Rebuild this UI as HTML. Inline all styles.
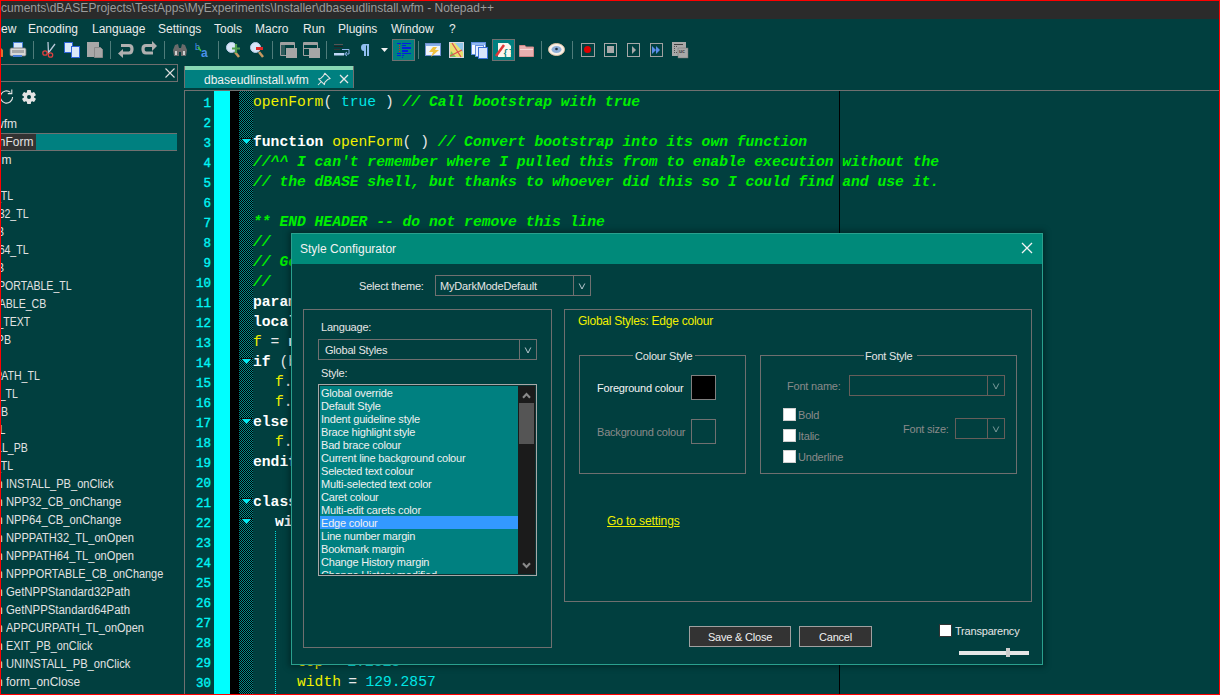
<!DOCTYPE html>
<html><head><meta charset="utf-8">
<style>
*{box-sizing:border-box;margin:0;padding:0}
html,body{width:1220px;height:695px;overflow:hidden}
body{background:#013f3f;position:relative;font-family:"Liberation Sans",sans-serif;font-size:12px;color:#e6e6e6}
.a{position:absolute;white-space:pre}
.t{position:absolute;white-space:pre;line-height:14px}
#title{left:0;top:0;width:1220px;height:19px;background:#2b2b2b}
#menu .t{top:22px;color:#ececec}
.sep{position:absolute;top:41px;width:1px;height:18px;background:#5c7070}
#lp{position:absolute;left:0;top:0;width:181px;height:695px;overflow:hidden}
#lp .t{color:#e2e2e2;left:0}
.code{position:absolute;left:253px;height:20px;line-height:20px;font-family:"Liberation Mono",monospace;font-size:14.67px;white-space:pre;color:#e0e0e0}
.ln{position:absolute;left:185px;width:26px;text-align:right;height:20px;line-height:20px;font-family:"Liberation Mono",monospace;font-size:12.5px;color:#00f4f4;-webkit-text-stroke:0.35px #00f4f4}
.cm{color:#00f000;font-weight:bold;font-style:italic}
.kw{color:#ffffff;font-weight:bold}
.fn{color:#f0f000}
.nu{color:#00e6e6}
.op{color:#e8e8e8}
.gb{position:absolute;border:1px solid #6f6f6f}
.dis{color:#8a8a8a}
.s{font-size:11px;letter-spacing:-0.2px}
.cb{position:absolute;width:13px;height:13px;background:#fff;border:1px solid #555}
</style></head><body>

<!-- title bar -->
<div id="title" class="a"></div>
<div class="t" style="left:1px;top:1px;color:#9c9c9c">cuments\dBASEProjects\TestApps\MyExperiments\Installer\dbaseudlinstall.wfm - Notepad++</div>

<!-- menu -->
<div id="menu">
<div class="t" style="left:1px">ew</div>
<div class="t" style="left:28px">Encoding</div>
<div class="t" style="left:92px">Language</div>
<div class="t" style="left:158px">Settings</div>
<div class="t" style="left:214px">Tools</div>
<div class="t" style="left:255px">Macro</div>
<div class="t" style="left:303px">Run</div>
<div class="t" style="left:338px">Plugins</div>
<div class="t" style="left:391px">Window</div>
<div class="t" style="left:449px">?</div>
</div>

<!-- toolbar -->
<div id="tb"><svg class="a" style="left:0;top:38px" width="700" height="24" viewBox="0 38 700 24" shape-rendering="crispEdges">
<g fill="#4f7c7a"><rect x="33" y="41" width="1" height="18"/><rect x="110" y="41" width="1" height="18"/><rect x="164" y="41" width="1" height="18"/><rect x="218" y="41" width="1" height="18"/><rect x="272" y="41" width="1" height="18"/><rect x="326" y="41" width="1" height="18"/><rect x="418" y="41" width="1" height="18"/><rect x="541" y="41" width="1" height="18"/><rect x="572" y="41" width="1" height="18"/></g>
<g shape-rendering="auto">
<!-- partial save-all icon -->
<path d="M1 48 L3 50 L3 57 L1 57 Z" fill="#e07030"/>
<!-- printer -->
<rect x="13.5" y="42.5" width="9" height="8" fill="#d8e8fa" stroke="#4a80d8"/>
<rect x="10" y="48" width="16" height="8" rx="1.5" fill="#d8d8d8" stroke="#707070" stroke-width="0.8"/>
<rect x="12" y="50" width="12" height="3" fill="#a8a8a8"/>
<rect x="13" y="55" width="9" height="2" fill="#4a80d8"/>
<!-- scissors -->
<path d="M48.5 54 L48 42 M49 52 L55 44" stroke="#b8c8d8" stroke-width="1.3" fill="none"/>
<circle cx="45" cy="53" r="2.2" stroke="#e04040" stroke-width="1.3" fill="none"/>
<circle cx="50.5" cy="55" r="2.2" stroke="#e04040" stroke-width="1.3" fill="none"/>
<!-- copy -->
<rect x="64.5" y="42.5" width="8" height="10" fill="#dbe8f8" stroke="#2f64d8"/>
<rect x="71.5" y="46.5" width="8" height="11" fill="#dbe8f8" stroke="#2f64d8"/>
<!-- paste -->
<rect x="87" y="42" width="12" height="15" fill="#a8a8a8"/>
<path d="M94.5 47.5 H100.5 L102.5 49.5 V57.5 H94.5 Z" fill="#a8a8a8" stroke="#8a8a8a"/>
<!-- undo -->
<path d="M121 45.5 H129 Q132 45.5 132 49 Q132 53 129 53 H122" stroke="#b0b0b0" stroke-width="3.2" fill="none"/>
<path d="M123 49 L118 53.5 L123 58 Z" fill="#b0b0b0"/>
<!-- redo -->
<path d="M154 45.5 H146 Q143 45.5 143 49 Q143 53 146 53 H153" stroke="#b0b0b0" stroke-width="3.2" fill="none" transform="translate(0,0)"/>
<path d="M152 41 L157 46 L152 51 Z" fill="#b0b0b0"/>
<!-- binoculars -->
<path d="M175 45 L178 44 L179 48 L181 48 L182 44 L185 45 L187 50 L186 56 L181 56 L181 52 L179 52 L179 56 L174 56 L173 50 Z" fill="#6a6a6a"/>
<rect x="175" y="51" width="2" height="4" fill="#d0d0d0"/><rect x="183" y="51" width="2" height="4" fill="#d0d0d0"/>
<!-- replace -->
<text x="195" y="50" font-family="Liberation Sans" font-size="9" fill="#4a90e8">b</text>
<text x="201" y="57" font-family="Liberation Sans" font-size="12" font-weight="bold" fill="#4a90e8">a</text>
<path d="M198 47 L201 51" stroke="#40c040" stroke-width="1.5"/>
<!-- zoom in -->
<circle cx="231.5" cy="47.5" r="5" fill="#d8e6f8" stroke="#b8cce8"/>
<path d="M235 52 L239 57" stroke="#c89860" stroke-width="2.5"/>
<path d="M236 44 V53 M232 48.5 H240" stroke="#50a050" stroke-width="2.2"/>
<!-- zoom out -->
<circle cx="255.5" cy="47.5" r="5" fill="#d8e6f8" stroke="#b8cce8"/>
<path d="M259 52 L263 57" stroke="#c89860" stroke-width="2.5"/>
<rect x="256" y="47" width="7" height="3" fill="#e02828"/>
<!-- sync v -->
<path d="M280.5 42.5 H294.5 V57.5 M280.5 42.5 V55.5 H286" stroke="#a0a0a0" fill="none"/>
<rect x="281" y="43" width="14" height="2" fill="#a0a0a0"/>
<rect x="286" y="48" width="11" height="10" fill="#a6a6a6"/>
<rect x="281" y="45" width="4" height="10" fill="#a0a0a0" opacity="0.3"/>
<!-- sync h -->
<path d="M303.5 42.5 H317.5 V50 M303.5 42.5 V55.5 H309" stroke="#a0a0a0" fill="none"/>
<rect x="304" y="43" width="14" height="2" fill="#a0a0a0"/>
<rect x="304" y="48" width="6" height="1" fill="#a0a0a0"/>
<rect x="309" y="48" width="11" height="10" fill="#a6a6a6"/>
<!-- word wrap -->
<rect x="334" y="44" width="9" height="1" fill="#555"/><rect x="334" y="46" width="9" height="1" fill="#222"/><rect x="334" y="49" width="6" height="1" fill="#333"/>
<rect x="334" y="53" width="10" height="2.5" fill="#c0d8f8"/>
<path d="M342 49.5 H349 V54 H345" stroke="#8ab0e8" stroke-width="1" fill="none"/>
<path d="M347 52 L344.5 54 L347 56" stroke="#8ab0e8" stroke-width="1" fill="none"/>
<!-- pilcrow -->
<path d="M362 44 H369 V56 H367 V45.5 H366 V56 H364 V51 Q361 51 361 47.5 Q361 44 364 44 Z" fill="#90bef0"/>
<!-- dropdown -->
<path d="M381 48 H388 L384.5 52 Z" fill="#f0f0f0"/>
<!-- indent guide pressed -->
<rect x="392.5" y="39.5" width="22" height="21" fill="#008080" stroke="#707070"/>
<g fill="#0020e0"><rect x="397" y="43" width="4" height="1"/><rect x="402" y="43" width="9" height="1"/><rect x="402" y="45" width="4" height="1"/><rect x="402" y="47" width="9" height="2"/><rect x="402" y="50" width="6" height="2"/><rect x="397" y="53" width="4" height="1"/><rect x="402" y="53" width="9" height="1"/><rect x="397" y="55" width="4" height="1"/><rect x="402" y="55" width="2" height="1"/><rect x="402" y="57" width="1" height="1"/></g>
<g fill="#e02020"><rect x="399" y="45" width="1" height="1"/><rect x="399" y="47" width="1" height="1"/><rect x="399" y="49" width="1" height="1"/><rect x="399" y="51" width="1" height="1"/></g>
<!-- lightning window -->
<rect x="425.5" y="43.5" width="15" height="12" fill="#f0f4fa" stroke="#7090d0"/>
<rect x="426" y="44" width="14" height="2" fill="#88aee8"/>
<path d="M433 47 L437 47 L435 50 L439 50 L431 57 L433 52 L429 52 Z" fill="#f0c040"/>
<!-- map -->
<rect x="449.5" y="42.5" width="14" height="15" fill="#e8e070" stroke="#d8d8e0"/>
<path d="M455 43 H463 V52 Z" fill="#90c8e8"/>
<path d="M451 51 L456 57 L450 57 Z" fill="#80c060"/>
<path d="M452 43 L461 57 M450 56 L462 50" stroke="#e05050" stroke-width="1.3"/>
<!-- multi doc -->
<rect x="471.5" y="42.5" width="14" height="12" fill="#f4f8ff" stroke="#6090e0"/>
<rect x="472" y="43" width="13" height="2" fill="#90b8f0"/>
<rect x="475.5" y="45.5" width="8" height="11" fill="#e8f0ff" stroke="#6090e0"/>
<rect x="478.5" y="47.5" width="9" height="11" fill="#d8e6fa" stroke="#3a70d8"/>
<!-- function list pressed -->
<rect x="492.5" y="39.5" width="22" height="21" fill="#008080" stroke="#707070"/>
<path d="M498 43 H508 L511 46 V57 H498 Z" fill="#faf6ee"/>
<path d="M496 56 L504 45" stroke="#e03838" stroke-width="2.5"/>
<text x="503" y="56" font-family="Liberation Mono" font-size="9" font-weight="bold" fill="#008080">{}</text>
<!-- folder -->
<path d="M519.5 45.5 H525 L526 47 H533.5 V56.5 H519.5 Z" fill="#e8b0b0" stroke="#d08888"/>
<rect x="520" y="49" width="13" height="1" fill="#f8d8d8"/>
<!-- eye -->
<ellipse cx="556.5" cy="49.5" rx="8" ry="6" fill="#f8f0e8" stroke="#e0c0a0"/>
<ellipse cx="556.5" cy="49.5" rx="5" ry="3.5" fill="#90b0d8"/>
<circle cx="556.5" cy="49" r="1.3" fill="#203040"/>
<!-- record -->
<rect x="581.5" y="43.5" width="13" height="13" fill="none" stroke="#a0a0a0"/>
<circle cx="587.5" cy="49.5" r="3.5" fill="#e00000"/>
<!-- stop -->
<rect x="604.5" y="43.5" width="12" height="13" fill="none" stroke="#a8a8a8"/>
<rect x="607" y="46" width="7" height="7" fill="#a8a8a8"/>
<!-- play -->
<rect x="627.5" y="43.5" width="12" height="13" fill="none" stroke="#a8a8a8"/>
<path d="M632 46 L636 50 L632 54 Z" fill="#a8a8a8"/>
<!-- play multi -->
<rect x="650.5" y="43.5" width="12" height="13" fill="none" stroke="#a0a0a0"/>
<path d="M652 46 L656 50 L652 54 Z M656 46 L660 50 L656 54 Z" fill="#5a8ce8"/>
<!-- save macro -->
<rect x="672" y="42" width="14" height="14" fill="#a8a8a8"/>
<rect x="674" y="44" width="9" height="1" fill="#404040"/>
<g fill="#505050"><rect x="674" y="46" width="1" height="1"/><rect x="676" y="46" width="1" height="1"/><rect x="674" y="48" width="1" height="1"/><rect x="674" y="50" width="1" height="1"/><rect x="674" y="52" width="1" height="1"/><rect x="676" y="52" width="1" height="1"/></g>
<rect x="678" y="48" width="10" height="10" fill="#a8a8a8" stroke="#707070" stroke-width="0.5"/>
<text x="679" y="53" font-family="Liberation Sans" font-size="5" font-weight="bold" fill="#404040">uc</text>
</g>
</svg>
</div>

<!-- left panel -->
<div id="lp">
<div class="a" style="left:-10px;top:64px;width:188px;height:18px;border:1px solid #6f6f6f"></div>
<svg class="a" style="left:164px;top:67px" width="12" height="12" viewBox="0 0 12 12"><path d="M1.5 1.5 L10.5 10.5 M10.5 1.5 L1.5 10.5" stroke="#e0e0e0" stroke-width="1.1"/></svg>
<svg class="a" style="left:0;top:86px" width="40" height="22" viewBox="0 86 40 22"><path d="M12.6 97 A6.1 6.1 0 1 1 10.4 92.3" stroke="#e4e4e4" stroke-width="1.1" fill="none"/><path d="M7.8 93.6 H11.8 V89.6" stroke="#e4e4e4" stroke-width="1.1" fill="none"/><g transform="translate(29,97)"><circle r="5.2" fill="#e4e4e4"/><rect x="-2" y="-7" width="4" height="4" rx="0.8" fill="#e4e4e4" transform="rotate(0)"/><rect x="-2" y="-7" width="4" height="4" rx="0.8" fill="#e4e4e4" transform="rotate(60)"/><rect x="-2" y="-7" width="4" height="4" rx="0.8" fill="#e4e4e4" transform="rotate(120)"/><rect x="-2" y="-7" width="4" height="4" rx="0.8" fill="#e4e4e4" transform="rotate(180)"/><rect x="-2" y="-7" width="4" height="4" rx="0.8" fill="#e4e4e4" transform="rotate(240)"/><rect x="-2" y="-7" width="4" height="4" rx="0.8" fill="#e4e4e4" transform="rotate(300)"/><circle r="2" fill="#013f3f"/></g></svg>
<div class="a" style="left:0;top:133px;width:177px;height:18px;background:#008080;border-top:1px solid #707070;border-bottom:1px solid #707070"></div>
<div class="a" style="left:0;top:134px;width:36px;height:16px;background:#333333"></div>
<div class="t" style="left:-5.0px;top:117px;transform:scaleX(1.0);transform-origin:0 0">wfm</div>
<div class="t" style="left:-1.2px;top:135px;transform:scaleX(1.0);transform-origin:0 0">nForm</div>
<div class="t" style="left:1.5px;top:153px;transform:scaleX(1.0);transform-origin:0 0">m</div>
<div class="t" style="left:-5.3px;top:189px;transform:scaleX(0.88);transform-origin:0 0">_TL</div>
<div class="t" style="left:-8.6px;top:207px;transform:scaleX(0.88);transform-origin:0 0">H32_TL</div>
<div class="t" style="left:-3.3px;top:225px;transform:scaleX(0.88);transform-origin:0 0">B</div>
<div class="t" style="left:-8.6px;top:243px;transform:scaleX(0.88);transform-origin:0 0">H64_TL</div>
<div class="t" style="left:-3.3px;top:261px;transform:scaleX(0.88);transform-origin:0 0">B</div>
<div class="t" style="left:-9.3px;top:279px;transform:scaleX(0.88);transform-origin:0 0">PPORTABLE_TL</div>
<div class="t" style="left:-7.1px;top:297px;transform:scaleX(0.88);transform-origin:0 0">TABLE_CB</div>
<div class="t" style="left:-9.1px;top:315px;transform:scaleX(0.88);transform-origin:0 0">T_TEXT</div>
<div class="t" style="left:-8.8px;top:333px;transform:scaleX(0.88);transform-origin:0 0">_PB</div>
<div class="t" style="left:-5.4px;top:369px;transform:scaleX(0.88);transform-origin:0 0">PATH_TL</div>
<div class="t" style="left:-8.5px;top:387px;transform:scaleX(0.88);transform-origin:0 0">R_TL</div>
<div class="t" style="left:-5.7px;top:405px;transform:scaleX(0.88);transform-origin:0 0">PB</div>
<div class="t" style="left:-7.1px;top:423px;transform:scaleX(0.88);transform-origin:0 0">TL</div>
<div class="t" style="left:-10.6px;top:441px;transform:scaleX(0.88);transform-origin:0 0">ALL_PB</div>
<div class="t" style="left:-5.0px;top:459px;transform:scaleX(0.88);transform-origin:0 0">_TL</div>
<div class="t" style="left:-4px;top:477px">n</div>
<div class="t" style="left:6px;top:477px;transform:scaleX(0.922);transform-origin:0 0">INSTALL_PB_onClick</div>
<div class="t" style="left:-4px;top:495px">n</div>
<div class="t" style="left:6px;top:495px;transform:scaleX(0.934);transform-origin:0 0">NPP32_CB_onChange</div>
<div class="t" style="left:-4px;top:513px">n</div>
<div class="t" style="left:6px;top:513px;transform:scaleX(0.934);transform-origin:0 0">NPP64_CB_onChange</div>
<div class="t" style="left:-4px;top:531px">n</div>
<div class="t" style="left:6px;top:531px;transform:scaleX(0.925);transform-origin:0 0">NPPPATH32_TL_onOpen</div>
<div class="t" style="left:-4px;top:549px">n</div>
<div class="t" style="left:6px;top:549px;transform:scaleX(0.925);transform-origin:0 0">NPPPATH64_TL_onOpen</div>
<div class="t" style="left:-4px;top:567px">n</div>
<div class="t" style="left:6px;top:567px;transform:scaleX(0.909);transform-origin:0 0">NPPPORTABLE_CB_onChange</div>
<div class="t" style="left:-4px;top:585px">n</div>
<div class="t" style="left:6px;top:585px;transform:scaleX(0.948);transform-origin:0 0">GetNPPStandard32Path</div>
<div class="t" style="left:-4px;top:603px">n</div>
<div class="t" style="left:6px;top:603px;transform:scaleX(0.948);transform-origin:0 0">GetNPPStandard64Path</div>
<div class="t" style="left:-4px;top:621px">n</div>
<div class="t" style="left:6px;top:621px;transform:scaleX(0.918);transform-origin:0 0">APPCURPATH_TL_onOpen</div>
<div class="t" style="left:-4px;top:639px">n</div>
<div class="t" style="left:6px;top:639px;transform:scaleX(0.905);transform-origin:0 0">EXIT_PB_onClick</div>
<div class="t" style="left:-4px;top:657px">n</div>
<div class="t" style="left:6px;top:657px;transform:scaleX(0.929);transform-origin:0 0">UNINSTALL_PB_onClick</div>
<div class="t" style="left:-4px;top:675px">n</div>
<div class="t" style="left:6px;top:675px;transform:scaleX(0.993);transform-origin:0 0">form_onClose</div>
</div>

<!-- editor -->
<div id="ed"><div class="a" style="left:184px;top:66px;width:170px;height:22px;background:#008080;border-left:1px solid #707070;border-right:1px solid #707070"></div>
<div class="a" style="left:185px;top:66px;width:168px;height:4px;background:#88d8b4"></div>
<div class="t" style="left:204px;top:73px;color:#f0f0f0">dbaseudlinstall.wfm</div>
<svg class="a" style="left:314px;top:70px" width="20" height="18" viewBox="314 70 20 18"><path d="M324.8 73.2 L330.2 78.6 L327.6 79.6 L324.8 82.4 L324.4 84.6 L318.6 78.8 L320.8 78.4 L323.6 75.6 Z M321.5 81.5 L318 85" stroke="#e4e4e4" stroke-width="1.05" fill="none" stroke-linejoin="round"/></svg>
<svg class="a" style="left:339px;top:74px" width="10" height="10" viewBox="0 0 10 10"><path d="M1 1 L9 9 M9 1 L1 9" stroke="#e8e8e8" stroke-width="1.3"/></svg>
<div class="a" style="left:184px;top:90px;width:1040px;height:610px;border-left:1px solid #707070;border-top:1px solid #707070"></div>
<div class="a" style="left:214px;top:91px;width:16px;height:604px;background:#00ffff"></div>
<div class="a" style="left:230px;top:91px;width:9px;height:604px;background:#000"></div>
<div class="a" style="left:239px;top:91px;width:14px;height:604px;background-color:#000;background-image:repeating-conic-gradient(#008a8a 0 25%, #000 0 50%);background-size:2px 2px"></div>
<div class="a" style="left:839px;top:91px;width:1px;height:604px;background:#000"></div>
<div class="a" style="left:275px;top:531px;width:1px;height:164px;background-image:linear-gradient(#00d8d8 50%, transparent 50%);background-size:1px 2px"></div>
<div class="ln" style="top:94px">1</div>
<div class="ln" style="top:114px">2</div>
<div class="ln" style="top:134px">3</div>
<div class="ln" style="top:154px">4</div>
<div class="ln" style="top:174px">5</div>
<div class="ln" style="top:194px">6</div>
<div class="ln" style="top:214px">7</div>
<div class="ln" style="top:234px">8</div>
<div class="ln" style="top:254px">9</div>
<div class="ln" style="top:274px">10</div>
<div class="ln" style="top:294px">11</div>
<div class="ln" style="top:314px">12</div>
<div class="ln" style="top:334px">13</div>
<div class="ln" style="top:354px">14</div>
<div class="ln" style="top:374px">15</div>
<div class="ln" style="top:394px">16</div>
<div class="ln" style="top:414px">17</div>
<div class="ln" style="top:434px">18</div>
<div class="ln" style="top:454px">19</div>
<div class="ln" style="top:474px">20</div>
<div class="ln" style="top:494px">21</div>
<div class="ln" style="top:514px">22</div>
<div class="ln" style="top:534px">23</div>
<div class="ln" style="top:554px">24</div>
<div class="ln" style="top:574px">25</div>
<div class="ln" style="top:594px">26</div>
<div class="ln" style="top:614px">27</div>
<div class="ln" style="top:634px">28</div>
<div class="ln" style="top:654px">29</div>
<div class="ln" style="top:674px">30</div>
<div class="code" style="top:92px"><span class="fn">openForm</span><span class="op">( </span><span class="nu">true</span><span class="op"> ) </span><span class="cm">// Call bootstrap with true</span></div>
<div class="code" style="top:132px"><span class="kw">function</span> <span class="fn">openForm</span><span class="op">( ) </span><span class="cm">// Convert bootstrap into its own function</span></div>
<div class="code" style="top:152px"><span class="cm">//^^ I can't remember where I pulled this from to enable execution without the</span></div>
<div class="code" style="top:172px"><span class="cm">// the dBASE shell, but thanks to whoever did this so I could find and use it.</span></div>
<div class="code" style="top:212px"><span class="cm">** END HEADER -- do not remove this line</span></div>
<div class="code" style="top:232px"><span class="cm">//</span></div>
<div class="code" style="top:252px"><span class="cm">// Generated</span></div>
<div class="code" style="top:272px"><span class="cm">//</span></div>
<div class="code" style="top:292px"><span class="kw">parameter</span></div>
<div class="code" style="top:312px"><span class="kw">local</span></div>
<div class="code" style="top:332px"><span class="fn">f</span><span class="op"> = </span><span class="kw">new</span></div>
<div class="code" style="top:352px"><span class="kw">if</span><span class="op"> (bM</span></div>
<div class="code" style="left:275px;top:372px"><span class="fn">f</span><span class="op">.</span></div>
<div class="code" style="left:275px;top:392px"><span class="fn">f</span><span class="op">.</span></div>
<div class="code" style="top:412px"><span class="kw">else</span></div>
<div class="code" style="left:275px;top:432px"><span class="fn">f</span><span class="op">.</span></div>
<div class="code" style="top:452px"><span class="kw">endif</span></div>
<div class="code" style="top:492px"><span class="kw">class</span></div>
<div class="code" style="left:275px;top:512px"><span class="kw">with</span></div>
<div class="code" style="left:297px;top:652px"><span class="fn">top</span><span class="op" style="margin-left:-1.5px"> = </span><span class="nu" style="margin-left:-1px">1.1818</span></div>
<div class="code" style="left:297px;top:672px"><span class="fn">width</span><span class="op" style="margin-left:-1.5px"> = </span><span class="nu" style="margin-left:-0.5px">129.2857</span></div>
<div class="a" style="left:241px;top:138px;width:12px;height:1px;background:#101010"></div>
<svg class="a" style="left:242px;top:139px" width="9" height="5" viewBox="0 0 9 5"><path d="M0 0 H9 L4.5 5 Z" fill="#00e8f0"/></svg>
<div class="a" style="left:241px;top:358px;width:12px;height:1px;background:#101010"></div>
<svg class="a" style="left:242px;top:359px" width="9" height="5" viewBox="0 0 9 5"><path d="M0 0 H9 L4.5 5 Z" fill="#00e8f0"/></svg>
<div class="a" style="left:241px;top:418px;width:12px;height:1px;background:#101010"></div>
<svg class="a" style="left:242px;top:419px" width="9" height="5" viewBox="0 0 9 5"><path d="M0 0 H9 L4.5 5 Z" fill="#00e8f0"/></svg>
<div class="a" style="left:241px;top:498px;width:12px;height:1px;background:#101010"></div>
<svg class="a" style="left:242px;top:499px" width="9" height="5" viewBox="0 0 9 5"><path d="M0 0 H9 L4.5 5 Z" fill="#00e8f0"/></svg>
<div class="a" style="left:241px;top:518px;width:12px;height:1px;background:#101010"></div>
<svg class="a" style="left:242px;top:519px" width="9" height="5" viewBox="0 0 9 5"><path d="M0 0 H9 L4.5 5 Z" fill="#00e8f0"/></svg></div>

<!-- dialog -->
<div id="dlg"><div class="a" style="left:291px;top:233px;width:752px;height:432px;box-shadow:0 0 6px 2px rgba(0,0,0,0.35)"></div>
<div class="a" style="left:291px;top:233px;width:752px;height:432px;background:#013f3f;border:1px solid #2aa08e"></div>
<div class="a" style="left:292px;top:234px;width:750px;height:30px;background:#008a7a"></div>
<div class="t" style="left:300px;top:242px;color:#f2f2f2">Style Configurator</div>
<svg class="a" style="left:1021px;top:242px" width="12" height="12" viewBox="0 0 12 12"><path d="M1 1 L11 11 M11 1 L1 11" stroke="#f4f4f4" stroke-width="1.3"/></svg>
<div class="t s" style="left:359px;top:279px">Select theme:</div>
<div class="a" style="left:435px;top:275px;width:156px;height:21px;border:1px solid #707070"></div>
<div class="a" style="left:573px;top:275px;width:1px;height:21px;background:#707070"></div>
<svg class="a" style="left:578.0px;top:281.5px" width="8" height="8" viewBox="0 0 8 8"><path d="M1.2 1.5 L4 7 L6.8 1.5" stroke="#b8c8d0" stroke-width="1" fill="none"/></svg>
<div class="t s" style="left:440px;top:279px;color:#e6e6e6">MyDarkModeDefault</div>
<div class="gb" style="left:303px;top:309px;width:249px;height:339px"></div>
<div class="t s" style="left:321px;top:320px">Language:</div>
<div class="a" style="left:318px;top:339px;width:219px;height:21px;border:1px solid #707070"></div>
<div class="a" style="left:519px;top:339px;width:1px;height:21px;background:#707070"></div>
<svg class="a" style="left:524.0px;top:345.5px" width="8" height="8" viewBox="0 0 8 8"><path d="M1.2 1.5 L4 7 L6.8 1.5" stroke="#b8c8d0" stroke-width="1" fill="none"/></svg>
<div class="t s" style="left:325px;top:343px;color:#e6e6e6">Global Styles</div>
<div class="t s" style="left:321px;top:366px">Style:</div>
<div class="a" style="left:318px;top:384px;width:219px;height:192px;border:1px solid #a8a8a8;background:#0d3434"></div>
<div class="a" style="left:320px;top:386px;width:198px;height:188px;background:#008080;overflow:hidden" id="lb">
<div class="t s" style="left:1px;top:0px;color:#f0f0f0">Global override</div>
<div class="t s" style="left:1px;top:13px;color:#f0f0f0">Default Style</div>
<div class="t s" style="left:1px;top:26px;color:#f0f0f0">Indent guideline style</div>
<div class="t s" style="left:1px;top:39px;color:#f0f0f0">Brace highlight style</div>
<div class="t s" style="left:1px;top:52px;color:#f0f0f0">Bad brace colour</div>
<div class="t s" style="left:1px;top:65px;color:#f0f0f0">Current line background colour</div>
<div class="t s" style="left:1px;top:78px;color:#f0f0f0">Selected text colour</div>
<div class="t s" style="left:1px;top:91px;color:#f0f0f0">Multi-selected text color</div>
<div class="t s" style="left:1px;top:104px;color:#f0f0f0">Caret colour</div>
<div class="t s" style="left:1px;top:117px;color:#f0f0f0">Multi-edit carets color</div>
<div class="a" style="left:0;top:130px;width:198px;height:13px;background:#3399ff"></div>
<div class="t s" style="left:1px;top:130px;color:#f0f0f0">Edge colour</div>
<div class="t s" style="left:1px;top:143px;color:#f0f0f0">Line number margin</div>
<div class="t s" style="left:1px;top:156px;color:#f0f0f0">Bookmark margin</div>
<div class="t s" style="left:1px;top:169px;color:#f0f0f0">Change History margin</div>
<div class="t s" style="left:1px;top:182px;color:#f0f0f0">Change History modified</div>
</div>
<div class="a" style="left:518px;top:386px;width:17px;height:188px;background:#1b1b1b"></div>
<div class="a" style="left:519px;top:403px;width:15px;height:41px;background:#555555"></div>
<svg class="a" style="left:522px;top:392px" width="9" height="7" viewBox="0 0 9 7"><path d="M1 5.8 L4.5 2 L8 5.8" stroke="#8a8a8a" stroke-width="2.1" fill="none"/></svg>
<svg class="a" style="left:522px;top:562px" width="9" height="7" viewBox="0 0 9 7"><path d="M1 1.2 L4.5 5 L8 1.2" stroke="#8a8a8a" stroke-width="2.1" fill="none"/></svg>
<div class="gb" style="left:564px;top:309px;width:468px;height:293px"></div>
<div class="t" style="left:578px;top:314px;color:#f0f000;letter-spacing:-0.25px">Global Styles: Edge colour</div>
<div class="gb" style="left:579px;top:355px;width:167px;height:119px"></div>
<div class="a" style="left:633px;top:350px;width:62px;height:10px;background:#013f3f"></div>
<div class="t s" style="left:635px;top:349px">Colour Style</div>
<div class="t s" style="left:597px;top:381px;color:#f4f4f4">Foreground colour</div>
<div class="a" style="left:691px;top:375px;width:25px;height:25px;border:1px solid #808080;background:#000"></div>
<div class="t s dis" style="left:597px;top:425px">Background colour</div>
<div class="a" style="left:691px;top:419px;width:25px;height:25px;border:1px solid #707070"></div>
<div class="gb" style="left:760px;top:355px;width:257px;height:119px"></div>
<div class="a" style="left:864px;top:350px;width:53px;height:10px;background:#013f3f"></div>
<div class="t s" style="left:865px;top:349px">Font Style</div>
<div class="t s dis" style="left:787px;top:379px">Font name:</div>
<div class="a" style="left:849px;top:375px;width:156px;height:21px;border:1px solid #665e5a"></div>
<div class="a" style="left:987px;top:375px;width:1px;height:21px;background:#665e5a"></div>
<svg class="a" style="left:992.0px;top:381.5px" width="8" height="8" viewBox="0 0 8 8"><path d="M1.2 1.5 L4 7 L6.8 1.5" stroke="#7a9a9a" stroke-width="1" fill="none"/></svg>
<div class="cb" style="left:783px;top:408px;border-color:#cfcfcf"></div>
<div class="t s dis" style="left:798px;top:408px">Bold</div>
<div class="cb" style="left:783px;top:429px;border-color:#cfcfcf"></div>
<div class="t s dis" style="left:798px;top:429px">Italic</div>
<div class="cb" style="left:783px;top:450px;border-color:#cfcfcf"></div>
<div class="t s dis" style="left:798px;top:450px">Underline</div>
<div class="t s dis" style="left:903px;top:422px">Font size:</div>
<div class="a" style="left:955px;top:418px;width:50px;height:21px;border:1px solid #665e5a"></div>
<div class="a" style="left:987px;top:418px;width:1px;height:21px;background:#665e5a"></div>
<svg class="a" style="left:992.0px;top:424.5px" width="8" height="8" viewBox="0 0 8 8"><path d="M1.2 1.5 L4 7 L6.8 1.5" stroke="#7a9a9a" stroke-width="1" fill="none"/></svg>
<div class="t" style="left:607px;top:514px;color:#f0f000;text-decoration:underline;letter-spacing:-0.1px">Go to settings</div>
<div class="a" style="left:689px;top:626px;width:102px;height:21px;background:#333;border:1px solid #a0a0a0"></div>
<div class="t s" style="left:689px;top:630px;width:102px;text-align:center;color:#f0f0f0">Save &amp; Close</div>
<div class="a" style="left:799px;top:626px;width:73px;height:21px;background:#333;border:1px solid #a0a0a0"></div>
<div class="t s" style="left:799px;top:630px;width:73px;text-align:center;color:#f0f0f0">Cancel</div>
<div class="cb" style="left:939px;top:624px;border-color:#333"></div>
<div class="t s" style="left:955px;top:624px">Transparency</div>
<div class="a" style="left:959px;top:651px;width:70px;height:4px;background:#e6e6e6"></div>
<div class="a" style="left:1006px;top:648px;width:4px;height:9px;background:#cdcdcd"></div></div>

<!-- red frame -->
<div class="a" style="left:0;top:0;width:1220px;height:1px;background:#f00"></div>
<div class="a" style="left:0;top:694px;width:1220px;height:1px;background:#f00"></div>
<div class="a" style="left:0;top:0;width:1px;height:695px;background:#f00"></div>
<div class="a" style="left:1219px;top:0;width:1px;height:695px;background:#f00"></div>
</body></html>
